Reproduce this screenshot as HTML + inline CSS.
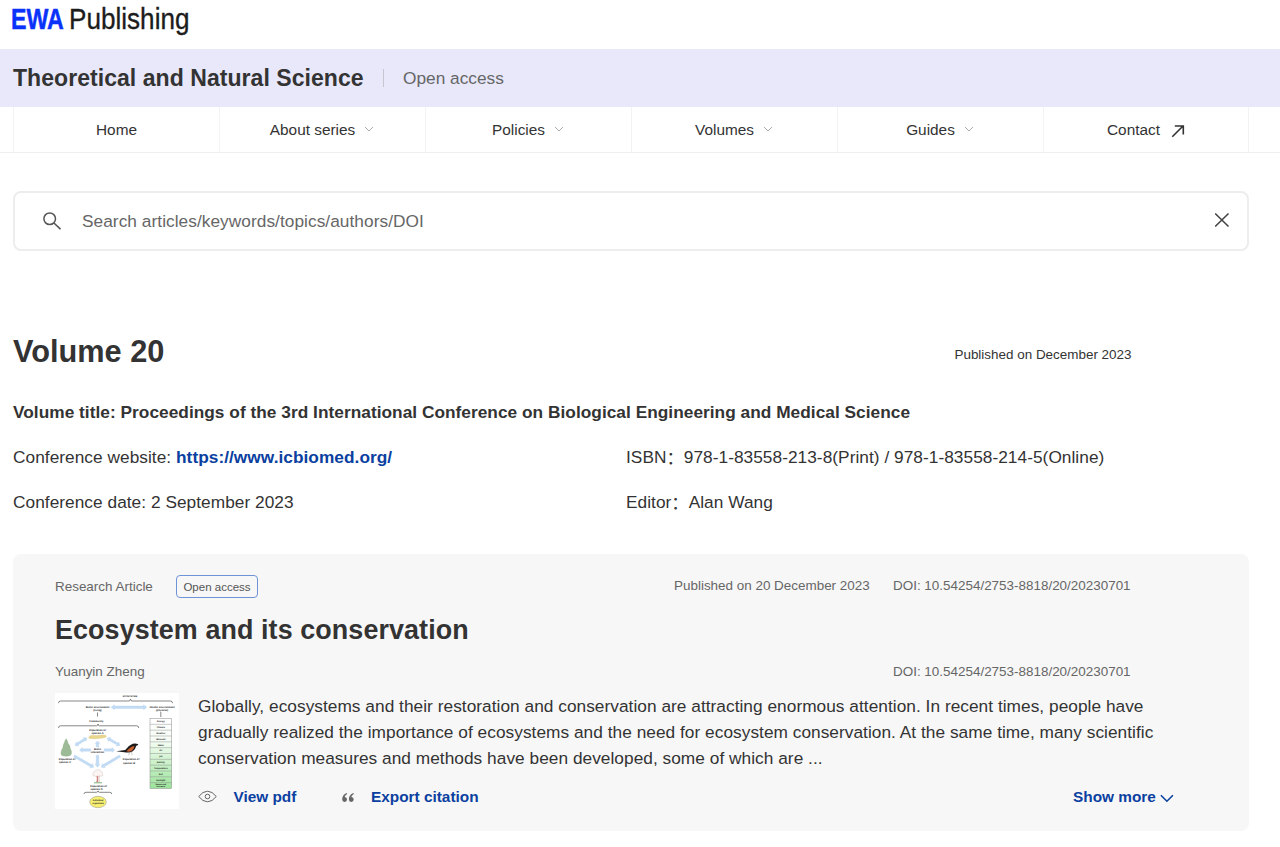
<!DOCTYPE html>
<html lang="en">
<head>
<meta charset="utf-8">
<title>Theoretical and Natural Science - Volume 20</title>
<style>
*{box-sizing:border-box;margin:0;padding:0}
html,body{width:1280px;height:847px;overflow:hidden;background:#fff}
body{font-family:"Liberation Sans","Noto Sans CJK SC",sans-serif;color:#333;position:relative}
a{text-decoration:none;color:inherit}
.abs{position:absolute;white-space:nowrap}
/* logo */
.logo{top:-1.5px;height:40px;line-height:40px;font-size:29.5px;transform-origin:0 50%}
.l1{left:11px;color:#0a32fa;font-weight:700;transform:scaleX(.785);-webkit-text-stroke:.5px #0a32fa}
.l2{left:68.5px;color:#1c1c1c;transform:scaleX(.885);-webkit-text-stroke:.35px #1c1c1c}
/* band */
.band{left:0;top:49px;width:1280px;height:58px;background:#e8e8fa}
.jtitle{left:13px;top:50px;height:57px;line-height:57px;font-size:23.04px;letter-spacing:.04px;font-weight:700;color:#333}
.sep{left:383px;top:68.5px;width:1px;height:18px;background:#c6c6d2}
.oa{left:403px;top:50px;height:57px;line-height:57px;font-size:17.28px;color:#666}
/* nav */
.navline{left:0;top:152px;width:1280px;height:1px;background:#efefef}
.nav{left:13px;top:107px;width:1236px;height:45px;display:flex}
.nav div{width:206px;border-left:1px solid #f3f3f3;height:45px;line-height:46px;text-align:center;font-size:15.36px;color:#333}
.nav div:last-child{width:206px;border-right:1px solid #f3f3f3}
.nav svg{vertical-align:middle;margin-left:8px;position:relative;top:-2px}
/* search */
.search{left:13px;top:191px;width:1236px;height:60px;border:2px solid #ededed;border-radius:8px;background:#fff}
.ph{left:82px;top:191px;height:60px;line-height:60px;font-size:17.28px;letter-spacing:.05px;color:#666}
/* volume */
.vol{left:13px;top:332px;height:40px;line-height:40px;font-size:30.72px;font-weight:700;color:#333}
.pub{right:148.5px;top:345px;height:20px;line-height:20px;font-size:13.44px;color:#333}
.vt{left:13px;top:401px;letter-spacing:.03px;height:22px;line-height:22px;font-size:17.28px;font-weight:700;color:#333}
.row{height:22px;line-height:22px;font-size:17.28px;letter-spacing:.04px;color:#333}
.row a{color:#0b3fa0;font-weight:700}
.fc{font-style:normal;position:relative;top:1px}
/* card */
.card{left:13px;top:554px;width:1236px;height:277px;background:#f7f7f7;border-radius:8px}
.ra{left:55px;top:577px;height:20px;line-height:20px;font-size:13.44px;color:#666}
.tag{left:176px;top:575px;width:82px;height:23px;line-height:22px;border:1px solid #6f94d6;border-radius:4px;font-size:11.52px;color:#555;text-align:center}
.meta{height:20px;line-height:20px;font-size:13.44px;color:#666}
.title{left:55px;top:612px;letter-spacing:.1px;height:36px;line-height:36px;font-size:26.88px;font-weight:700;color:#333}
.abstract{left:198px;top:693px;width:1000px;font-size:17.28px;line-height:26px;letter-spacing:.035px;color:#333;white-space:normal}
.act{height:22px;line-height:22px;font-size:15.36px;font-weight:700;color:#0b3fa0}
.thumb{left:55px;top:693px;width:124px;height:116px;background:#fff}
</style>
</head>
<body>
<div class="abs logo l1">EWA</div><div class="abs logo l2">Publishing</div>

<div class="abs band"></div>
<div class="abs jtitle">Theoretical and Natural Science</div>
<div class="abs sep"></div>
<div class="abs oa">Open access</div>

<div class="abs navline"></div>
<div class="abs nav">
  <div>Home</div>
  <div>About series<svg width="12" height="12" viewBox="0 0 12 12"><path d="M2 4l4 4 4-4" fill="none" stroke="#aaa" stroke-width="1"/></svg></div>
  <div>Policies<svg width="12" height="12" viewBox="0 0 12 12"><path d="M2 4l4 4 4-4" fill="none" stroke="#aaa" stroke-width="1"/></svg></div>
  <div>Volumes<svg width="12" height="12" viewBox="0 0 12 12"><path d="M2 4l4 4 4-4" fill="none" stroke="#aaa" stroke-width="1"/></svg></div>
  <div>Guides<svg width="12" height="12" viewBox="0 0 12 12"><path d="M2 4l4 4 4-4" fill="none" stroke="#aaa" stroke-width="1"/></svg></div>
  <div>Contact<svg width="14" height="14" viewBox="0 0 14 14" style="margin-left:11px;top:0"><path d="M1.3 12.7L12 2M3.8 2h8.5v8.5" fill="none" stroke="#333" stroke-width="1.6"/></svg></div>
</div>

<div class="abs search"></div>
<svg class="abs" style="left:42px;top:211px" width="20" height="20" viewBox="0 0 20 20"><circle cx="7.7" cy="7.75" r="5.8" fill="none" stroke="#555" stroke-width="1.5"/><path d="M11.9 12l6.6 6.2" stroke="#555" stroke-width="1.6"/></svg>
<div class="abs ph">Search articles/keywords/topics/authors/DOI</div>
<svg class="abs" style="left:1214px;top:212px" width="16" height="16" viewBox="0 0 16 16"><path d="M1.2 1.5l13.3 13M14.5 1.5L1.2 14.5" stroke="#444" stroke-width="1.6"/></svg>

<div class="abs vol">Volume 20</div>
<div class="abs pub">Published on December 2023</div>
<div class="abs vt">Volume title: Proceedings of the 3rd International Conference on Biological Engineering and Medical Science</div>
<div class="abs row" style="left:13px;top:446px">Conference website: <a>https://www.icbiomed.org/</a></div>
<div class="abs row" style="left:626px;top:446px">ISBN<i class="fc">：</i>978-1-83558-213-8(Print) / 978-1-83558-214-5(Online)</div>
<div class="abs row" style="left:13px;top:491px">Conference date: 2 September 2023</div>
<div class="abs row" style="left:626px;top:491px">Editor<i class="fc">：</i>Alan Wang</div>

<div class="abs card"></div>
<div class="abs ra">Research Article</div>
<div class="abs tag">Open access</div>
<div class="abs meta" style="left:674px;top:576px">Published on 20 December 2023</div>
<div class="abs meta" style="left:893px;top:576px">DOI: 10.54254/2753-8818/20/20230701</div>
<div class="abs title">Ecosystem and its conservation</div>
<div class="abs meta" style="left:55px;top:662px">Yuanyin Zheng</div>
<div class="abs meta" style="left:893px;top:662px">DOI: 10.54254/2753-8818/20/20230701</div>
<!--THUMB--><svg class="abs thumb" width="124" height="116" viewBox="0 0 124 116" font-family="Liberation Sans, sans-serif" font-size="2.6" fill="#222" font-weight="bold" text-rendering="geometricPrecision" text-anchor="middle">
<rect width="124" height="116" fill="#fff"/>
<text x="75" y="4.1" font-size="2.3">ECOSYSTEM</text>
<g fill="none" stroke="#555" stroke-width=".7">
<path d="M3.5 10.2 q0 -2.2 2 -2.2 L74.0 8.0 q1.2 0 1.5 -1.8 q.3 1.8 1.5 1.8 L115.5 8.0 q2 0 2 2.2"/>
<path d="M3.5 35.0 q0 -2.2 2 -2.2 L41.5 32.8 q1.2 0 1.5 -1.8 q.3 1.8 1.5 1.8 L81.7 32.8 q2 0 2 2.2"/>
<path d="M29.0 101.1 q0 -1.8 2 -1.8 L41.5 99.3 q1.2 0 1.5 -1.4 q.3 1.4 1.5 1.4 L54.7 99.3 q2 0 2 1.8"/>
<path d="M42.5 19.5v4M105.8 19v5"/>
</g>
<text x="42.5" y="14.500">Biotic environment</text><text x="42.5" y="17.600">(living)</text>
<text x="107" y="14.800">Abiotic environment</text><text x="107" y="17.900">(physical)</text>
<text x="41.4" y="28.500">Community</text>
<text x="42.5" y="37.700">Population of</text><text x="42.5" y="40.800">species A</text>
<text x="42.5" y="56.8">Biotic</text><text x="42.5" y="60">interaction</text>
<text x="12" y="67">Population of</text><text x="10" y="70.300">species C</text>
<text x="76" y="67.400">Population of</text><text x="74" y="70.700">species B</text>
<text x="43.5" y="94">Population of</text><text x="41.5" y="97.300">species D</text>
<g fill="#c3dcf5" stroke="#a9c8ea" stroke-width=".3">
<polygon points="56.0,14.3 59.4,16.8 59.4,15.5 88.6,15.5 88.6,16.8 92.0,14.3 88.6,11.8 88.6,13.1 59.4,13.1 59.4,11.8"/>
<polygon points="43.7,54.0 43.7,50.6 44.9,50.6 42.5,48.0 40.1,50.6 41.3,50.6 41.3,54.0"/>
<polygon points="35.7,55.8 27.3,55.8 27.3,54.6 24.5,57.0 27.3,59.4 27.3,58.2 35.7,58.2"/>
<polygon points="49.2,58.2 56.9,58.2 56.9,59.4 59.7,57.0 56.9,54.6 56.9,55.8 49.2,55.8"/>
<polygon points="41.2,62.2 41.2,71.2 40.0,71.2 42.5,74.2 45.0,71.2 43.8,71.2 43.8,62.2"/>
<polygon points="20.0,52.5 23.6,53.0 23.0,51.9 30.2,47.4 30.8,48.4 32.0,45.0 28.4,44.5 29.0,45.6 21.8,50.1 21.2,49.1"/>
<polygon points="52.2,45.0 53.5,48.4 54.1,47.4 62.0,52.0 61.4,53.1 65.0,52.5 63.7,49.1 63.1,50.1 55.2,45.5 55.8,44.4"/>
<polygon points="18.6,64.0 35.5,73.7 34.9,74.8 38.7,74.2 37.3,70.6 36.7,71.7 19.8,62.0"/>
<polygon points="64.4,62.0 48.2,71.6 47.5,70.6 46.2,74.2 50.0,74.7 49.4,73.7 65.6,64.0"/>
</g>
<path d="M33.5 44.5q1-2 4-2.2q5 .6 10 -.2q3-.4 4 1q-.5 1.8-4 2q-5 .8-10 .6q-3.5 0-4-1.2z" fill="#e9d68f" stroke="#d4bd6a" stroke-width=".3"/>
<path d="M11.200 45.700q1.500 2 1.800 4.500q2 2 2.200 5q1.800 3 1.300 5.500q-.5 2-3 2.200q-3 .6-6-.2q-2-.6-1.500-3q.3-3 1.800-5q.3-3 1.700-5.500q.6-2.500 1.700-3.500z" fill="#9dbb96" stroke="#7fa47a" stroke-width=".3"/>
<path d="M61.200 58.300l9 -1.200q3-4.500 7.500-6.300q3-.9 5 .3l.6 1l-2 .6q-.8 3.500-3.500 5.500q-3 1.800-6.500 1.200z" fill="#1d1a1a"/>
<path d="M71.500 58.200q3.500-4.500 8-5.200q-.5 3.200-3 5q-2.500 1.200-5 .2z" fill="#c9602f"/>
<path d="M74.500 59.200l-.8 3M76.500 59l.6 3.200" stroke="#8a7a70" stroke-width=".4"/>
<path d="M37.800 82.500q.2-5 5-5.800q4.800.6 5 5.800q-2.500 1-5 .8q-2.500.3-5-.8z" fill="#fbf6f4" stroke="#c9b3ae" stroke-width=".4"/>
<path d="M41.800 83.200q.5 3 -.2 6h3q-.8-3-.2-6z" fill="#f3e4e0" stroke="#c98f88" stroke-width=".3"/>
<path d="M41.800 83.200q.5 3 -.2 6h1.300q-.3-3 .1-6z" fill="#c9756e"/>
<path d="M39 89.800h8" stroke="#6fae6a" stroke-width=".9"/>
<ellipse cx="43" cy="109" rx="8.300" ry="5.700" fill="#f6ef72" stroke="#777" stroke-width=".4"/>
<text x="43" y="108.300" font-size="2.3">Individual</text><text x="43" y="111.200" font-size="2.3">organisms</text>
<defs><linearGradient id="tg" x1="0" y1="0" x2="0" y2="1"><stop offset="0" stop-color="#fff"/><stop offset=".3" stop-color="#f7fdf6"/><stop offset="1" stop-color="#9be39a"/></linearGradient></defs>
<rect x="95.0" y="25.5" width="21.7" height="70.0" fill="url(#tg)" stroke="#8a8a8a" stroke-width=".5"/>
<path d="M95.0 31.33h21.7M95.0 37.17h21.7M95.0 43.00h21.7M95.0 48.83h21.7M95.0 54.67h21.7M95.0 60.50h21.7M95.0 66.33h21.7M95.0 72.17h21.7M95.0 78.00h21.7M95.0 83.83h21.7M95.0 89.67h21.7" stroke="#8a8a8a" stroke-width=".45" fill="none"/>
<text x="105.8" y="29.20" font-size="2.3">Energy</text>
<text x="105.8" y="35.03" font-size="2.3">Climate</text>
<text x="105.8" y="40.87" font-size="2.3">Weather</text>
<text x="105.8" y="46.70" font-size="2.3">Minerals</text>
<text x="105.8" y="52.53" font-size="2.3">Water</text>
<text x="105.8" y="58.37" font-size="2.3">Air</text>
<text x="105.8" y="64.20" font-size="2.3">pH</text>
<text x="105.8" y="70.03" font-size="2.3">Salinity</text>
<text x="105.8" y="75.87" font-size="2.3">Temperature</text>
<text x="105.8" y="81.70" font-size="2.3">Soil</text>
<text x="105.8" y="87.53" font-size="2.3">Sunlight</text>
<text x="105.8" y="92.07" font-size="2.1">Space and</text><text x="105.8" y="94.47" font-size="2.1">nutrients</text>
</svg><!--/THUMB-->
<div class="abs abstract">Globally, ecosystems and their restoration and conservation are attracting enormous attention. In recent times, people have gradually realized the importance of ecosystems and the need for ecosystem conservation. At the same time, many scientific conservation measures and methods have been developed, some of which are ...</div>
<svg class="abs" style="left:198px;top:790px" width="19" height="13" viewBox="0 0 19 13"><path d="M.7 6.500Q4.800 1.200 9.500 1.200T18.300 6.500Q14.200 11.800 9.500 11.800T.7 6.500z" fill="none" stroke="#666" stroke-width="1"/><circle cx="9.500" cy="6.500" r="2.300" fill="none" stroke="#666" stroke-width="1"/></svg>
<svg class="abs" style="left:342px;top:793px" width="12" height="9" viewBox="0 0 12 9"><g fill="#666"><path id="qm" d="M.2 6.500C.2 3.200 1.800 1 4.700 0l.5 1C3.600 1.800 2.800 2.900 2.700 4.100a2.400 2.400 0 1 1-2.500 2.400z"/><path d="M.2 6.500C.2 3.200 1.800 1 4.700 0l.5 1C3.600 1.800 2.800 2.900 2.700 4.100a2.400 2.400 0 1 1-2.500 2.400z" transform="translate(6.700 0)"/></g></svg>
<svg class="abs" style="left:1160px;top:794px" width="14" height="9" viewBox="0 0 14 9"><path d="M.9 1.200L6.900 7.200L12.900 1.200" fill="none" stroke="#0b3fa0" stroke-width="1.600"/></svg>
<div class="abs act" style="left:233.5px;top:786px">View pdf</div>
<div class="abs act" style="left:371px;top:786px">Export citation</div>
<div class="abs act" style="left:1073px;top:786px">Show more</div>
</body>
</html>
